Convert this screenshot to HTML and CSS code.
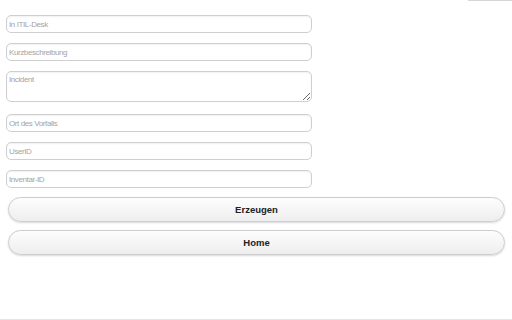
FILE: index.html
```html
<!DOCTYPE html>
<html>
<head>
<meta charset="utf-8">
<link rel="stylesheet" href="styles.css">
</head>
<body>
<div class="app">
  <div class="topbar"><div class="tab"></div></div>
  <form class="form">
    <input class="field" type="text" placeholder="In ITIL-Desk">
    <input class="field" type="text" placeholder="Kurzbeschreibung">
    <textarea class="field area" placeholder="Incident"></textarea>
    <input class="field" type="text" placeholder="Ort des Vorfalls">
    <input class="field" type="text" placeholder="UserID">
    <input class="field" type="text" placeholder="Inventar-ID">
    <div class="buttons">
      <button type="button" class="btn">Erzeugen</button>
      <button type="button" class="btn">Home</button>
    </div>
  </form>
  <div class="footer"></div>
</div>
</body>
</html>
```
FILE: styles.css
```css
html, body {
  margin: 0;
  padding: 0;
  background: #fff;
}
.app {
  display: flex;
  flex-direction: column;
  height: 320px;
  font-family: "Liberation Sans", Arial, sans-serif;
}
.topbar {
  display: flex;
  justify-content: flex-end;
  height: 1px;
}
.tab {
  width: 44px;
  height: 1px;
  background: #d6d6d6;
}
.form {
  display: flex;
  flex-direction: column;
  padding: 14px 0 0 6px;
  margin: 0;
}
.field {
  display: block;
  width: 306px;
  height: 18px;
  box-sizing: border-box;
  border: 1px solid #cfcfcf;
  border-radius: 5px;
  margin: 0 0 10px 0;
  padding: 0 2px;
  font-family: "Liberation Sans", Arial, sans-serif;
  font-size: 8px;
  letter-spacing: -0.4px;
  color: #333;
  background: #fff;
  box-shadow: inset 0 1px 2px rgba(0,0,0,0.06);
  outline: none;
}
.field::placeholder {
  color: #a4a4a4;
}
.area {
  height: 31px;
  padding-top: 3px;
  margin-bottom: 12px;
  resize: vertical;
}
.buttons {
  display: flex;
  flex-direction: column;
  gap: 8px;
  margin: -1px 7px 0 2px;
}
.btn {
  height: 25px;
  border: 1px solid #cdcdcd;
  border-radius: 13px;
  background: linear-gradient(#fdfdfd, #eeeeee);
  box-shadow: 0 1px 2px rgba(0,0,0,0.15);
  font-family: "Liberation Sans", Arial, sans-serif;
  font-size: 9.5px;
  font-weight: bold;
  color: #222;
  padding: 0;
}
.footer {
  margin-top: auto;
  height: 1px;
  background: #e6e6e6;
}
```
